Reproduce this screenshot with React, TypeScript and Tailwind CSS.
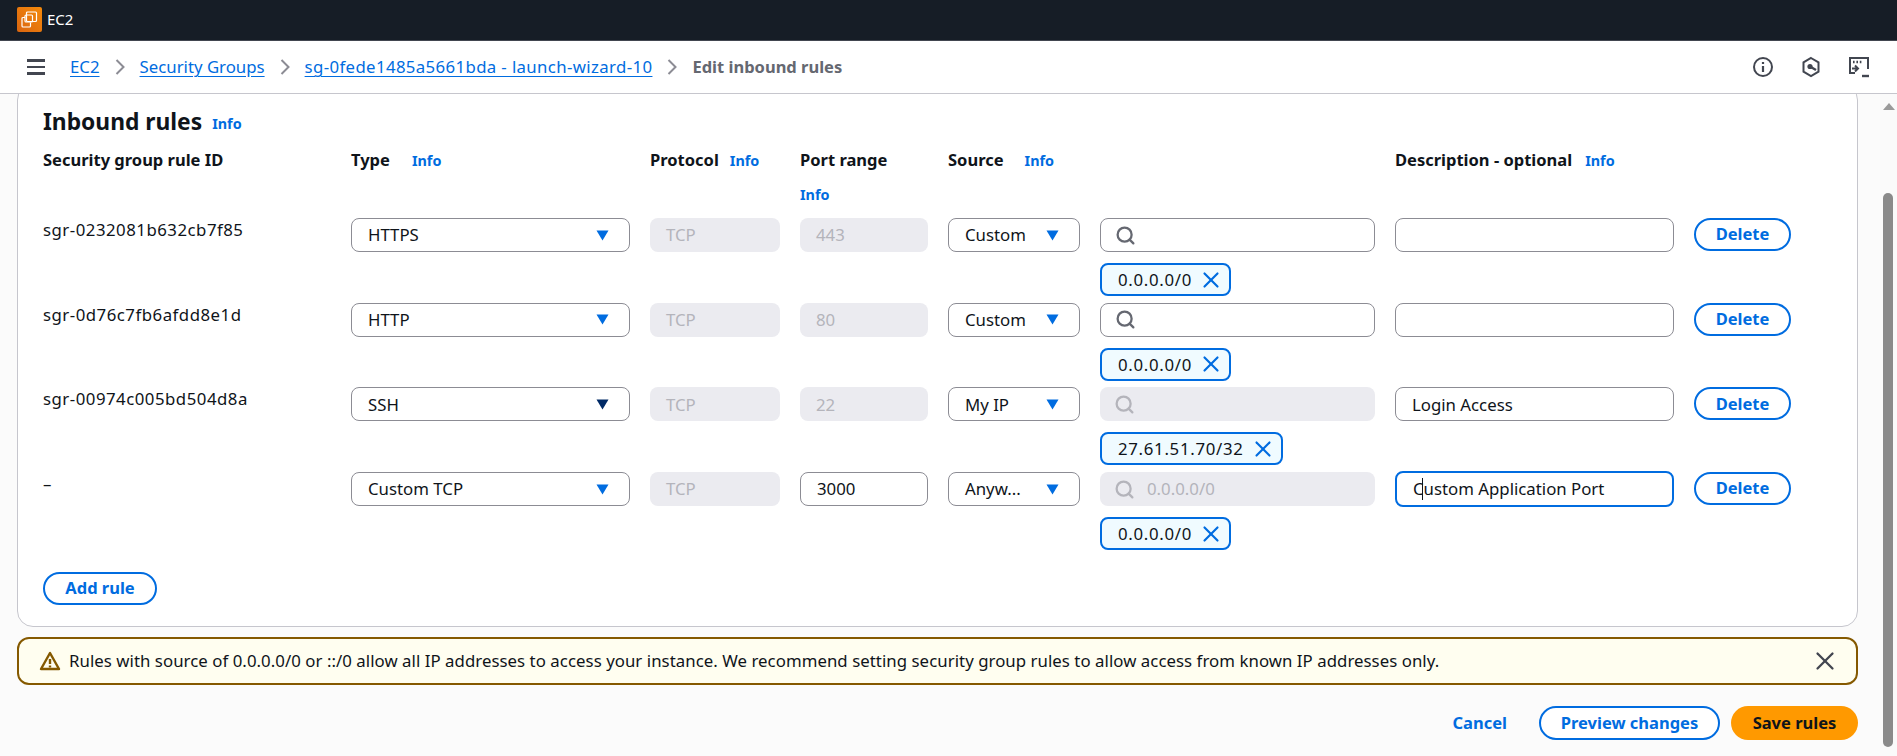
import { X, Search } from "lucide-react";

const font = "font-['Noto_Sans','Open_Sans',sans-serif]";

const GRID =
  "grid grid-cols-[288px_279px_130px_128px_132px_275px_279px_97px] gap-x-5";

const rules = [
  { id: "sgr-0232081b632cb7f85", type: "HTTPS", port: "443", source: "Custom", chip: "0.0.0.0/0", desc: "" },
  { id: "sgr-0d76c7fb6afdd8e1d", type: "HTTP", port: "80", source: "Custom", chip: "0.0.0.0/0", desc: "" },
  { id: "sgr-00974c005bd504d8a", type: "SSH", port: "22", source: "My IP", chip: "27.61.51.70/32", desc: "Login Access", dark: true, locked: true },
  { id: "–", type: "Custom TCP", port: "3000", source: "Anyw...", chip: "0.0.0.0/0", desc: "Custom Application Port", editable: true, locked: true, placeholder: "0.0.0.0/0", focused: true },
];

const crumbs = [
  { label: "EC2", className: "" },
  { label: "Security Groups", className: "" },
  { label: "sg-0fede1485a5661bda - launch-wizard-10", className: "tracking-[0.37px]" },
];

const Info = ({ className = "" }: { className?: string }) => (
  <span className={`text-[14.4px] font-bold text-[#006ce0] ${className}`}>Info</span>
);

const Caret = ({ dark }: { dark?: boolean }) => (
  <svg width="13" height="11" viewBox="0 0 13 11" className="shrink-0">
    <path d="M0.5 0.5h12L6.5 10.5z" fill={dark ? "#002a66" : "#006ce0"} />
  </svg>
);

const Select = ({ label, dark }: { label: string; dark?: boolean }) => (
  <div className="flex h-[34px] items-center justify-between rounded-lg border border-[#8c8c94] bg-white pl-4 pr-5 text-[#0f141a]">
    <span>{label}</span>
    <Caret dark={dark} />
  </div>
);

const Disabled = ({ value }: { value: string }) => (
  <div className="flex h-[34px] items-center rounded-lg bg-[#ebebf0] px-4 text-[#b4b4bb]">
    {value}
  </div>
);

const PillButton = ({ label, className = "" }: { label: string; className?: string }) => (
  <button className={`flex h-[33px] items-center justify-center rounded-[20px] border-2 border-[#006ce0] bg-white text-[16.5px] font-bold text-[#006ce0] ${className}`}>
    {label}
  </button>
);

const HeaderIcons = () => (
  <div className="flex items-center gap-[27px] pr-[27px] text-[#424650]">
    <svg width="22" height="22" viewBox="0 0 22 22" fill="none" stroke="currentColor" strokeWidth="2">
      <circle cx="11" cy="11" r="9" />
      <path d="M11 10v6" strokeWidth="2.2" />
      <path d="M11 6v2" strokeWidth="2.2" />
    </svg>
    <svg width="20" height="22" viewBox="0 0 20 22" fill="none" stroke="currentColor" strokeWidth="2">
      <path d="M10 2l7.5 4.4v9.2L10 20l-7.5-4.4V6.4z" />
      <circle cx="9" cy="10.5" r="2.6" fill="currentColor" stroke="none" />
      <path d="M9 10.5l6 3.5" strokeWidth="2.4" />
    </svg>
    <svg width="22" height="22" viewBox="0 0 22 22" fill="none" stroke="currentColor" strokeWidth="2">
      <path d="M7 17H2V2h18v11" />
      <path d="M5 6h1.6M8.4 6H10M11.8 6h1.6" strokeWidth="2.4" />
      <path d="M3 10.5h5.5M6 7.5l3 3-3 3" transform="translate(1 2)" />
      <path d="M14 20h7" strokeWidth="2.4" />
    </svg>
  </div>
);

const Scrollbar = () => (
  <div className="flex w-[17px] shrink-0 flex-col items-center bg-[#fafafa]">
    <div className="mt-[9px] h-0 w-0 border-x-[6px] border-b-[7px] border-x-transparent border-b-[#9a9a9a]" />
    <div className="ml-[-1px] mt-[83px] h-[554px] w-[10px] rounded-[5px] bg-[#8a8a8a]" />
  </div>
);

export default function App() {
  return (
    <div className={`${font} flex h-screen flex-col overflow-hidden bg-[#fbfbfb] text-[16.8px] text-[#0f141a]`}>
      <header className="flex h-[41px] shrink-0 items-center gap-[5px] border-b border-[#424650] bg-[#161d26] pb-[1px] pl-[17px]">
        <div className="flex h-[25px] w-[25px] items-center justify-center rounded-[2px] bg-gradient-to-tr from-[#d9650f] to-[#f58a0b]">
          <svg width="19" height="19" viewBox="0 0 19 19" fill="none" stroke="white" strokeWidth="1.2">
            <rect x="6.5" y="2" width="10" height="9.5" rx="1" />
            <rect x="5" y="5" width="7.5" height="7" rx="1" />
            <path d="M5 7.5H3a1 1 0 0 0-1 1V16a1 1 0 0 0 1 1h6.5a1 1 0 0 0 1-1v-3.5" />
          </svg>
        </div>
        <span className="text-[15px] text-white">EC2</span>
      </header>

      <nav className="flex h-[53px] shrink-0 items-center justify-between border-b border-[#c6c6cd] bg-white">
        <div className="flex items-center">
          <div className="ml-[27px] mr-[25px] flex w-[18px] flex-col gap-[4px]">
            <span className="h-[2.5px] bg-[#424650]" />
            <span className="h-[2.5px] bg-[#424650]" />
            <span className="h-[2.5px] bg-[#424650]" />
          </div>
          {crumbs.map((crumb) => (
            <div key={crumb.label} className="flex items-center">
              <span className={`text-[#006ce0] underline underline-offset-[3px] ${crumb.className}`}>{crumb.label}</span>
              <svg width="12" height="18" viewBox="0 0 12 18" fill="none" stroke="#8c8c94" strokeWidth="2" className="mx-[14px]">
                <path d="M2.5 2l7 7-7 7" />
              </svg>
            </div>
          ))}
          <span className="text-[16.5px] font-bold text-[#656871]">Edit inbound rules</span>
        </div>
        <HeaderIcons />
      </nav>

      <div className="flex min-h-0 flex-1">
        <main className="min-w-0 flex-1 overflow-hidden pl-[17px] pr-[22px]">
          <section className="mt-[-10px] rounded-2xl border border-[#c6c6cd] bg-white pb-[21px] pl-[25px] pt-[25px]">
            <div className="flex h-6 items-center gap-[10px]">
              <h2 className="text-[22.8px] font-bold leading-6">Inbound rules</h2>
              <Info className="mt-[4px]" />
            </div>

            <div className={`${GRID} mt-4 h-[56px] text-[16.5px] font-bold leading-5`}>
              <div>Security group rule ID</div>
              <div className="flex gap-[22px]">Type <Info className="mt-[1px]" /></div>
              <div className="flex gap-[11px]">Protocol <Info className="mt-[1px]" /></div>
              <div className="flex flex-col gap-[15px]">Port range <Info /></div>
              <div className="flex gap-[21px]">Source <Info className="mt-[1px]" /></div>
              <div />
              <div className="flex gap-[13px]">Description - optional <Info className="mt-[1px]" /></div>
              <div />
            </div>

            <div className="mt-3 flex flex-col gap-[6.7px]">
              {rules.map((rule) => (
                <div key={rule.id} className={GRID}>
                  <div className="pt-[2px] leading-5 tracking-[0.5px]">{rule.id}</div>
                  <Select label={rule.type} dark={rule.dark} />
                  <Disabled value="TCP" />
                  {rule.editable ? (
                    <div className="flex h-[34px] items-center rounded-lg border border-[#8c8c94] bg-white px-4">{rule.port}</div>
                  ) : (
                    <Disabled value={rule.port} />
                  )}
                  <Select label={rule.source} />
                  <div>
                    <div className={`flex h-[34px] items-center gap-[12px] rounded-lg pl-[14px] ${rule.locked ? "bg-[#ebebf0] text-[#b4b4bb]" : "border border-[#8c8c94] bg-white text-[#656871]"}`}>
                      <Search size={21} strokeWidth={2.6} />
                      {rule.placeholder && <span>{rule.placeholder}</span>}
                    </div>
                    <div className="mt-[11px] flex h-[33px] w-fit items-center gap-[6px] rounded-lg border-2 border-[#006ce0] bg-[#f0fbff] pl-4 pr-[5px]">
                      <span className="tracking-[0.7px]">{rule.chip}</span>
                      <X size={26} strokeWidth={2} className="text-[#006ce0]" />
                    </div>
                  </div>
                  {rule.focused ? (
                    <div className="relative mt-[-1px] flex h-[36px] items-center rounded-lg border-2 border-[#006ce0] bg-white px-4">
                      {rule.desc}
                      <span className="absolute left-[25px] top-[5px] h-[22px] w-[1px] bg-[#0f141a]" />
                    </div>
                  ) : (
                    <div className="flex h-[34px] items-center rounded-lg border border-[#8c8c94] bg-white px-4">{rule.desc}</div>
                  )}
                  <PillButton label="Delete" />
                </div>
              ))}
            </div>

            <PillButton label="Add rule" className="mt-[22px] w-[114px]" />
          </section>

          <div className="mt-[10px] flex h-[48px] items-center rounded-xl border-2 border-[#855900] bg-[#fffef0] pl-5 pr-[16px]">
            <svg width="22" height="20" viewBox="0 0 22 20" fill="none" stroke="#855900" strokeWidth="2.4" className="mr-2 shrink-0">
              <path d="M11 2L2 18h18z" strokeLinejoin="round" />
              <path d="M11 8v5M11 14.5v2" />
            </svg>
            <span className="flex-1 tracking-[0.05px]">Rules with source of 0.0.0.0/0 or ::/0 allow all IP addresses to access your instance. We recommend setting security group rules to allow access from known IP addresses only.</span>
            <X size={30} strokeWidth={1.8} className="text-[#424650]" />
          </div>

          <div className="mt-[21px] flex items-center justify-end">
            <span className="mr-[32px] text-[16.5px] font-bold text-[#006ce0]">Cancel</span>
            <PillButton label="Preview changes" className="h-[34px] w-[181px]" />
            <button className="ml-[11px] h-[34px] w-[127px] rounded-[20px] bg-[#ff9900] text-[16.5px] font-bold">Save rules</button>
          </div>
        </main>
        <Scrollbar />
      </div>
    </div>
  );
}
